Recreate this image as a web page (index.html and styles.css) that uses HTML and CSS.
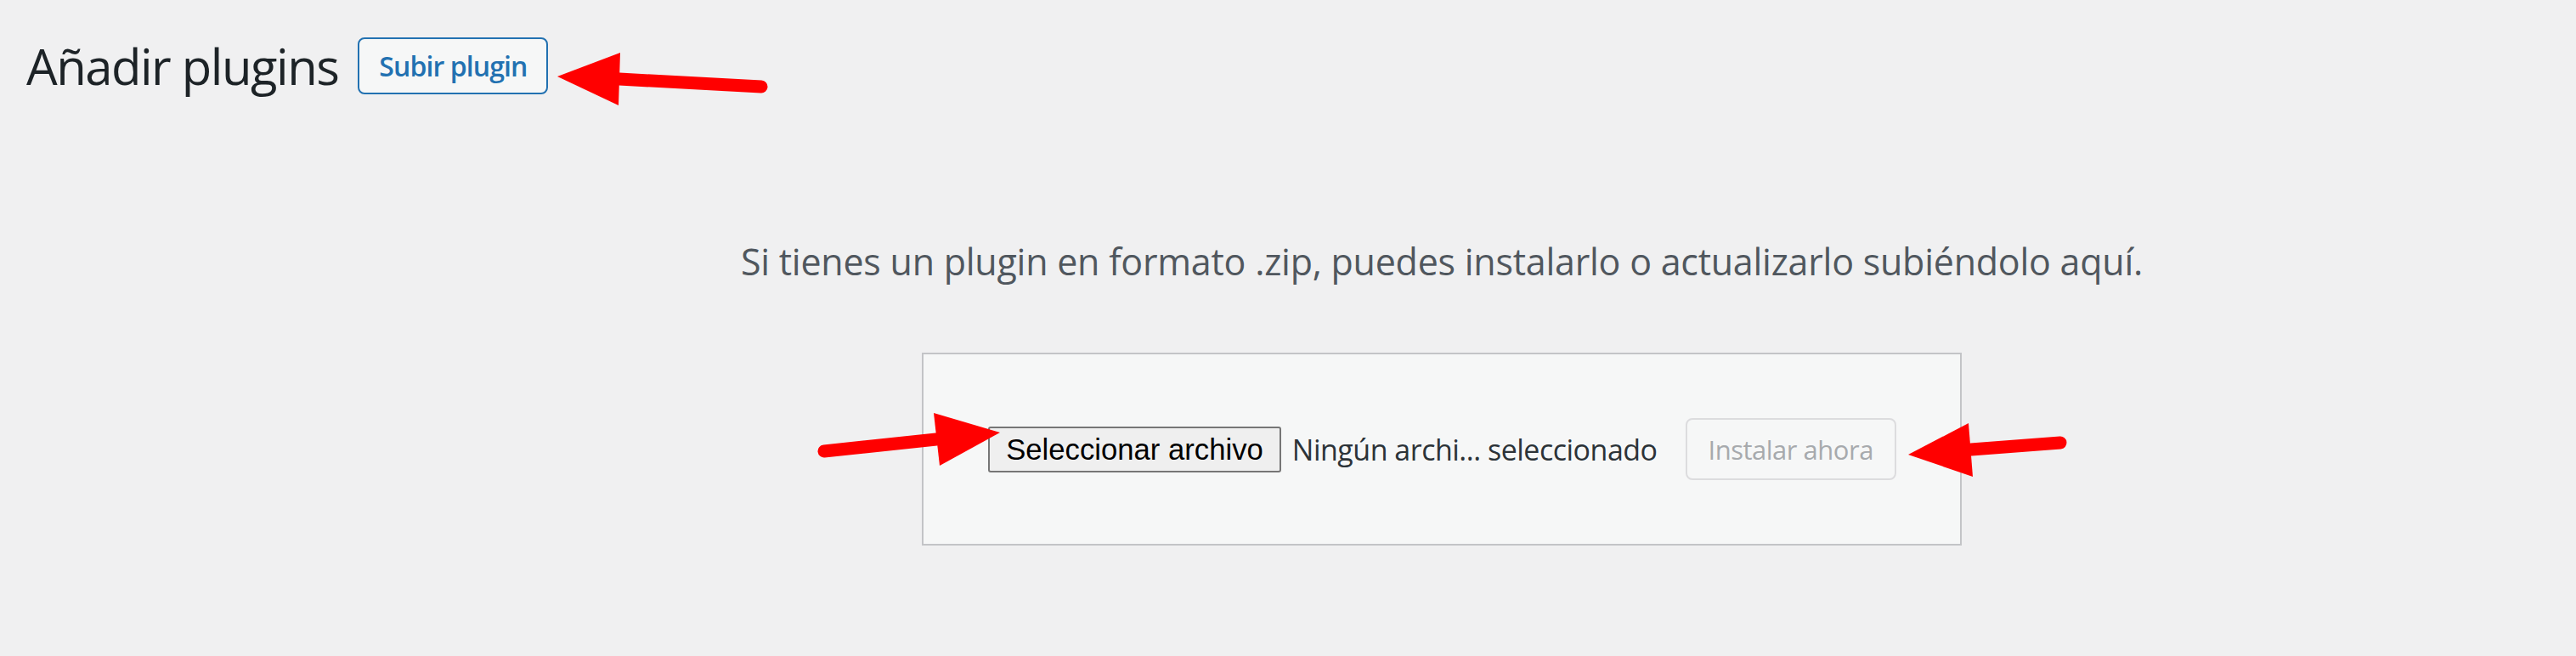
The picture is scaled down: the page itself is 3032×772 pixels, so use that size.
FILE: index.html
```html
<!DOCTYPE html>
<html lang="es">
<head>
  <meta charset="UTF-8">
  <meta name="viewport" content="width=device-width, initial-scale=1.0">
  <title>Añadir plugins</title>
  <link rel="stylesheet" href="styles.css">
</head>
<body>
  <div class="wrap">
    <div class="title-row">
      <h1>Añadir plugins</h1>
      <a href="#" class="page-title-action">Subir plugin</a>
    </div>

    <div class="upload-plugin">
      <p class="install-help">Si tienes un plugin en formato .zip, puedes instalarlo o actualizarlo subiéndolo aquí.</p>
      <form class="wp-upload-form" onsubmit="return false;">
        <button type="button" class="file-button">Seleccionar archivo</button>
        <span class="file-name">Ningún archi... seleccionado</span>
        <button type="submit" class="install-button" disabled>Instalar ahora</button>
      </form>
    </div>
  </div>

  <!-- annotation arrows drawn over the screenshot -->
  <svg class="arrows" width="3032" height="772" viewBox="0 0 3032 772">
    <g fill="#ff0000" stroke="#ff0000" stroke-width="15" stroke-linecap="round">
      <line x1="729" y1="93" x2="896" y2="102" />
      <line x1="970" y1="531" x2="1102" y2="517" />
      <line x1="2320" y1="529" x2="2425" y2="521" />
    </g>
    <g fill="#ff0000">
      <polygon points="656,90 730,62 728,124" />
      <polygon points="1177,509 1099,486 1106,548" />
      <polygon points="2246,535 2317,498 2322,561" />
    </g>
  </svg>
</body>
</html>
```

FILE: styles.css
```css
html, body {
  margin: 0;
  padding: 0;
}
body {
  position: relative;
  width: 3032px;
  height: 772px;
  overflow: hidden;
  background-color: #f0f0f1;
  font-family: "Open Sans", "Noto Sans", sans-serif;
  color: #3c434a;
}
.wrap {
  padding: 44px 0 0 31px;
}
.title-row {
  display: flex;
  align-items: center;
  gap: 23px;
}
h1 {
  margin: 0;
  font-size: 58px;
  font-weight: 400;
  letter-spacing: -1.5px;
  line-height: 67px;
  color: #1d2327;
}
.page-title-action {
  box-sizing: border-box;
  display: inline-flex;
  align-items: center;
  justify-content: center;
  width: 224px;
  height: 67px;
  border: 2px solid #2271b1;
  border-radius: 8px;
  background: #f6f7f7;
  color: #2271b1;
  font-size: 32px;
  font-weight: 600;
  letter-spacing: -0.9px;
  text-decoration: none;
}
.upload-plugin {
  margin: 165px 0 0 331px;
  text-align: center;
}
.install-help {
  margin: 0 0 76px;
  font-size: 43px;
  letter-spacing: -0.25px;
  line-height: 63px;
  color: #50575e;
}
.wp-upload-form {
  display: flex;
  align-items: center;
  width: fit-content;
  margin: 0 auto;
  padding: 75px 75px 75px 76px;
  border: 2px solid #c3c4c7;
  background: #f6f7f7;
}
.file-button {
  box-sizing: border-box;
  height: 54px;
  padding: 0 19px;
  border: 2px solid #767676;
  border-radius: 3px;
  background: #efefef;
  color: #000;
  font-family: "Liberation Sans", Arial, sans-serif;
  font-size: 34.7px;
  line-height: 40px;
}
.file-name {
  margin-left: 13px;
  font-size: 34px;
  letter-spacing: -0.5px;
  color: #2c3338;
}
.install-button {
  box-sizing: border-box;
  height: 73px;
  margin-left: 33px;
  padding: 0 25px;
  border: 2px solid #dcdcde;
  border-radius: 8px;
  background: #f6f7f7;
  color: #a7aaad;
  font-family: "Open Sans", "Noto Sans", sans-serif;
  font-size: 31px;
  letter-spacing: -0.5px;
}
.arrows {
  position: absolute;
  top: 0;
  left: 0;
  pointer-events: none;
}
```
